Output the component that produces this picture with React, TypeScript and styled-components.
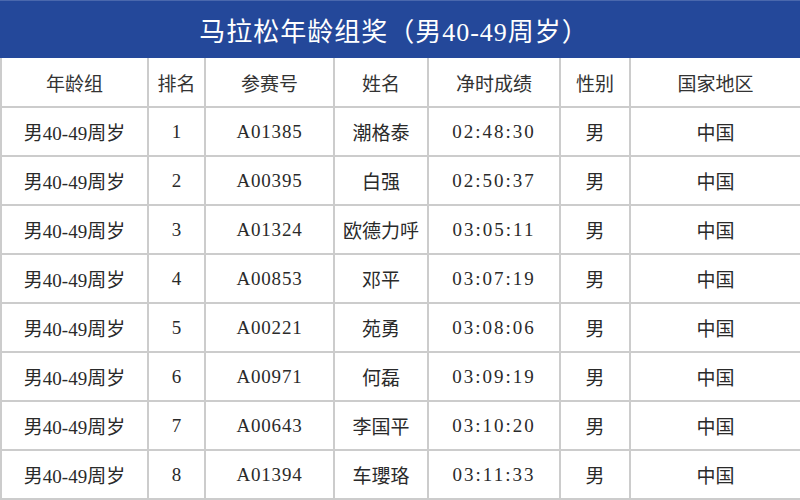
import React from "react";
import styled, { createGlobalStyle } from "styled-components";

const Global = createGlobalStyle`
  html, body { margin: 0; padding: 0; background: #ffffff; }
  body { width: 800px; height: 500px; overflow: hidden; }
`;

const Page = styled.div`
  width: 800px;
  height: 500px;
  display: flex;
  flex-direction: column;
  background: #fff;
  font-family: "Liberation Serif", "Noto Sans CJK SC", serif;
`;

const Banner = styled.div`
  height: 58px;
  flex: none;
  background: #24489a;
  border-top: 1px solid #4a68ad;
  box-sizing: border-box;
  display: flex;
  align-items: center;
  justify-content: center;
  color: #ffffff;
  font-size: 26px;
  letter-spacing: 1px;
  padding-right: 12px;
`;

const Table = styled.table`
  width: 800px;
  border-collapse: collapse;
  table-layout: fixed;
`;

const HeadCell = styled.th`
  height: 48px;
  padding: 0;
  border: 2px solid #cccccc;
  border-top: none;
  font-weight: 400;
  font-size: 19px;
  color: #333333;
  text-align: center;
  vertical-align: middle;
`;

const Cell = styled.td<{ $spacing?: number }>`
  height: 47px;
  padding: 0;
  border: 2px solid #cccccc;
  font-size: 19px;
  color: #2a2a2a;
  text-align: center;
  vertical-align: middle;
  letter-spacing: ${(p) => p.$spacing ?? 0}px;
  white-space: nowrap;
`;

const widths = [147, 57, 129, 94, 132, 70, 171];
const heads = ["年龄组", "排名", "参赛号", "姓名", "净时成绩", "性别", "国家地区"];

const rows: [string, string, string][] = [
  ["A01385", "潮格泰", "02:48:30"],
  ["A00395", "白强", "02:50:37"],
  ["A01324", "欧德力呼", "03:05:11"],
  ["A00853", "邓平", "03:07:19"],
  ["A00221", "苑勇", "03:08:06"],
  ["A00971", "何磊", "03:09:19"],
  ["A00643", "李国平", "03:10:20"],
  ["A01394", "车瓔珞", "03:11:33"],
];

export default function App() {
  return (
    <Page>
      <Global />
      <Banner>马拉松年龄组奖（男40-49周岁）</Banner>
      <Table>
        <colgroup>
          {widths.map((w, i) => (
            <col key={i} style={{ width: w }} />
          ))}
        </colgroup>
        <thead>
          <tr>
            {heads.map((h) => (
              <HeadCell key={h}>{h}</HeadCell>
            ))}
          </tr>
        </thead>
        <tbody>
          {rows.map(([id, name, time], i) => (
            <tr key={id}>
              <Cell>男40-49周岁</Cell>
              <Cell>{i + 1}</Cell>
              <Cell $spacing={0.8}>{id}</Cell>
              <Cell>{name}</Cell>
              <Cell $spacing={2}>{time}</Cell>
              <Cell>男</Cell>
              <Cell>中国</Cell>
            </tr>
          ))}
        </tbody>
      </Table>
    </Page>
  );
}
